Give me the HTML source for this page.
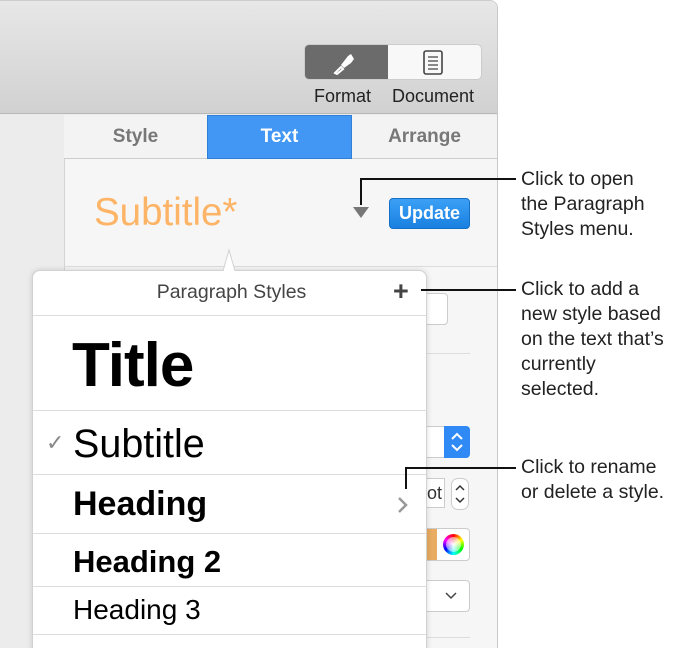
<!DOCTYPE html>
<html><head><style>
*{margin:0;padding:0;box-sizing:border-box}
html,body{width:686px;height:648px;overflow:hidden}
body{background:#fff;position:relative;font-family:"Liberation Sans",Arial,sans-serif}
.a{position:absolute}
.ann{position:absolute;left:521px;font-size:19.5px;line-height:25px;color:#222;white-space:nowrap}
.ln{position:absolute;background:#111}
.sep{position:absolute;left:33px;width:393px;height:1px;background:#ddd}
</style></head><body>
<div class="a" style="left:0;top:0;width:498px;height:648px;background:#ececec;border-right:1px solid #c8c8c8;border-top:1px solid #ccc;border-top-right-radius:8px"></div>
<div class="a" style="left:0;top:1px;width:497px;height:113px;background:linear-gradient(#e8e7e8,#d2d1d2);border-bottom:1px solid #b8b8b8;border-top-right-radius:7px"></div>
<div class="a" style="left:304px;top:44px;width:178px;height:36px;border-radius:5px;background:#f8f8f8;border:1px solid #ccc;overflow:hidden">
 <div class="a" style="left:0;top:0;width:83px;height:36px;background:#6b6b6b"></div>
 <svg class="a" style="left:28px;top:6px" width="26" height="24" viewBox="0 0 26 24"><path d="M8 14 L15 5 L18 3 L21 8 L18 12 L11 17Z" fill="#fff"/><path d="M2 22 L8 16 L10 18 L4 23Z" fill="none" stroke="#fff" stroke-width="2"/></svg>
 <svg class="a" style="left:116px;top:5px" width="24" height="26"><rect x="3" y="1" width="18" height="23" rx="2" fill="none" stroke="#444" stroke-width="1.6"/><path d="M7 7h10M7 11h10M7 15h10M7 19h10" stroke="#444" stroke-width="1.3"/></svg>
</div>
<div class="a" style="left:314px;top:86px;font-size:18px;color:#222">Format</div>
<div class="a" style="left:392px;top:86px;font-size:18px;color:#222">Document</div>
<div class="a" style="left:64px;top:115px;width:433px;height:533px;background:#f6f6f6;border-left:1px solid #d4d4d4"></div>
<div class="a" style="left:64px;top:115px;width:433px;height:44px;border-bottom:1px solid #ccc;background:#f3f3f3"></div>
<div class="a" style="left:207px;top:115px;width:145px;height:44px;background:#4197f3;border:1px solid #2f7fd8"></div>
<div class="a" style="left:64px;top:126px;width:143px;text-align:center;font-size:19px;font-weight:bold;color:#777">Style</div>
<div class="a" style="left:207px;top:126px;width:145px;text-align:center;font-size:19px;font-weight:bold;color:#fff">Text</div>
<div class="a" style="left:352px;top:126px;width:145px;text-align:center;font-size:19px;font-weight:bold;color:#777">Arrange</div>
<div class="a" style="left:94px;top:191px;font-size:38.5px;color:#fdb466">Subtitle*</div>
<div class="a" style="left:353px;top:207px;width:0;height:0;border-left:8px solid transparent;border-right:8px solid transparent;border-top:11px solid #777"></div>
<div class="a" style="left:389px;top:198px;width:81px;height:31px;border-radius:4px;background:linear-gradient(#3ba0f5,#1a80e0);border:1px solid #1670c8;color:#fff;font-weight:bold;font-size:18px;text-align:center;line-height:29px">Update</div>
<div class="a" style="left:64px;top:266px;width:433px;height:1px;background:#ddd"></div>
<div class="a" style="left:420px;top:293px;width:28px;height:32px;border:1px solid #ccc;border-radius:4px;background:#fff"></div>
<div class="a" style="left:426px;top:353px;width:44px;height:1px;background:#ddd"></div>
<div class="a" style="left:420px;top:426px;width:50px;height:32px;border-radius:4px;background:#fff;border:1px solid #ccc"></div>
<div class="a" style="left:444px;top:426px;width:26px;height:32px;border-radius:0 4px 4px 0;background:#2f8af5"></div>
<svg class="a" style="left:449px;top:430px" width="16" height="24"><path d="M3 9 L8 4 L13 9 M3 15 L8 20 L13 15" fill="none" stroke="#fff" stroke-width="2"/></svg>
<div class="a" style="left:426px;top:478px;width:19px;height:30px;border:1px solid #ccc;background:#fff;font-size:18px;line-height:28px;color:#333">ot</div>
<div class="a" style="left:451px;top:478px;width:18px;height:32px;border:1px solid #ccc;border-radius:7px;background:#fff"></div>
<svg class="a" style="left:453px;top:481px" width="14" height="26"><path d="M3 9 L7 5 L11 9 M3 17 L7 21 L11 17" fill="none" stroke="#333" stroke-width="1.5"/></svg>
<div class="a" style="left:420px;top:528px;width:50px;height:33px;border:1px solid #ccc;border-radius:4px;background:#fff"></div>
<div class="a" style="left:420px;top:529px;width:17px;height:31px;background:#e8ac62"></div>
<div class="a" style="left:443px;top:534px;width:21px;height:21px;border-radius:50%;background:conic-gradient(red,yellow,lime,cyan,blue,magenta,red)"></div>
<div class="a" style="left:446px;top:537px;width:15px;height:15px;border-radius:50%;background:radial-gradient(#fff,rgba(255,255,255,0.3))"></div>
<div class="a" style="left:420px;top:580px;width:50px;height:32px;border:1px solid #ccc;border-radius:4px;background:#fff"></div>
<svg class="a" style="left:444px;top:590px" width="14" height="12"><path d="M2 3 L7 8 L12 3" fill="none" stroke="#444" stroke-width="1.5"/></svg>
<div class="a" style="left:426px;top:637px;width:44px;height:1px;background:#ddd"></div>
<div class="a" style="left:32px;top:270px;width:395px;height:390px;background:#fff;border:1px solid #d2d2d2;border-radius:8px;box-shadow:0 0 6px rgba(0,0,0,0.15)"></div>
<svg class="a" style="left:205px;top:248px" width="48" height="24"><path d="M0 23 L18 23 L24 2 L30 23 L48 23" fill="#fff" stroke="#d2d2d2"/><rect x="0" y="23" width="48" height="2" fill="#fff"/></svg>
<div class="a" style="left:33px;top:281px;width:393px;text-align:center;font-size:19.5px;color:#444;padding-left:4px">Paragraph Styles</div>
<div class="a" style="left:393px;top:281px;font-size:27px;line-height:20px;color:#444;font-weight:bold">+</div>
<div class="sep" style="top:315px"></div>
<div class="a" style="left:72px;top:331px;font-size:62px;font-weight:bold;color:#000;letter-spacing:-1px;line-height:70px">Title</div>
<div class="sep" style="top:410px"></div>
<div class="a" style="left:46px;top:430px;font-size:22px;color:#888">✓</div>
<div class="a" style="left:73px;top:421px;font-size:39.5px;color:#000;line-height:46px">Subtitle</div>
<div class="sep" style="top:474px"></div>
<div class="a" style="left:73px;top:484px;font-size:34px;font-weight:bold;color:#000;line-height:40px">Heading</div>
<svg class="a" style="left:396px;top:495px" width="14" height="20"><path d="M3 3 L10 10 L3 17" fill="none" stroke="#999" stroke-width="2.5"/></svg>
<div class="sep" style="top:533px"></div>
<div class="a" style="left:73px;top:544px;font-size:31px;font-weight:bold;color:#000;line-height:36px">Heading 2</div>
<div class="sep" style="top:586px"></div>
<div class="a" style="left:73px;top:593px;font-size:28px;color:#000;line-height:34px">Heading 3</div>
<div class="sep" style="top:634px"></div>
<div class="ln" style="left:360px;top:178px;width:1.5px;height:27px"></div>
<div class="ln" style="left:360px;top:178px;width:156px;height:1.5px"></div>
<div class="ln" style="left:421px;top:289px;width:95px;height:1.5px"></div>
<div class="ln" style="left:405px;top:467px;width:1.5px;height:22px"></div>
<div class="ln" style="left:405px;top:467px;width:111px;height:1.5px"></div>
<div class="ann" style="top:167px">Click to open<br>the Paragraph<br>Styles menu.</div>
<div class="ann" style="top:277px">Click to add a<br>new style based<br>on the text that’s<br>currently<br>selected.</div>
<div class="ann" style="top:455px">Click to rename<br>or delete a style.</div>
</body></html>
